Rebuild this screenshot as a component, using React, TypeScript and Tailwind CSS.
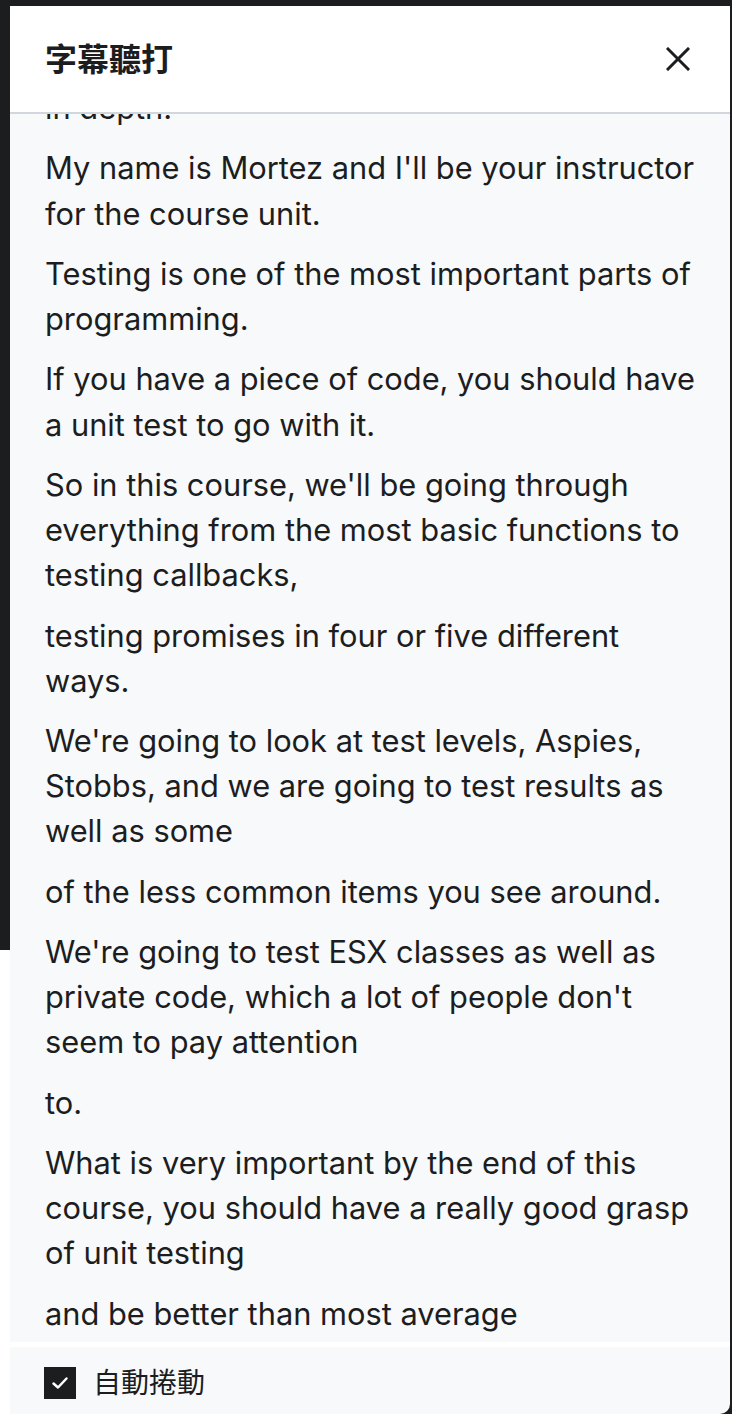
const cues: string[][] = [
  ["in depth."],
  ["My name is Mortez and I'll be your instructor", "for the course unit."],
  ["Testing is one of the most important parts of", "programming."],
  ["If you have a piece of code, you should have", "a unit test to go with it."],
  [
    "So in this course, we'll be going through",
    "everything from the most basic functions to",
    "testing callbacks,",
  ],
  ["testing promises in four or five different", "ways."],
  [
    "We're going to look at test levels, Aspies,",
    "Stobbs, and we are going to test results as",
    "well as some",
  ],
  ["of the less common items you see around."],
  [
    "We're going to test ESX classes as well as",
    "private code, which a lot of people don't",
    "seem to pay attention",
  ],
  ["to."],
  [
    "What is very important by the end of this",
    "course, you should have a really good grasp",
    "of unit testing",
  ],
  ["and be better than most average"],
];

export default function App() {
  return (
    <div
      className="flex h-[1414px] w-[732px] overflow-hidden bg-[#1c1d1f] text-[#1c1d1f]"
      style={{ fontFamily: "Inter, 'Noto Sans CJK TC', sans-serif" }}
    >
      <div className="flex w-[10px] flex-col">
        <div className="h-[950px] bg-[#1c1d1f]" />
        <div className="flex-1 bg-white" />
      </div>
      <div className="mt-[6px] flex w-[720px] flex-col overflow-hidden rounded-br-[10px]">
        <div className="flex h-[108px] shrink-0 items-center justify-between border-b-2 border-[#d1d7dc] bg-white pl-[35px] pr-[40px]">
          <h2 className="pt-[2px] text-[32px] font-bold leading-none">字幕聽打</h2>
          <button aria-label="關閉" className="flex h-[24px] w-[24px] items-center justify-center">
            <svg width="24" height="24" viewBox="0 0 24 24" fill="none" stroke="#1c1d1f" strokeWidth="3" strokeLinecap="square">
              <path d="M2 2L22 22M22 2L2 22" />
            </svg>
          </button>
        </div>
        <div className="flex-1 overflow-hidden bg-[#f7f9fa] px-[35px]">
          <div className="-mt-[29px] flex flex-col gap-[15.2px] text-[30.8px] leading-[45.15px]">
            {cues.map((lines, i) => (
              <p key={i}>
                {lines.map((l, j) => (
                  <span key={j} className="block whitespace-nowrap">
                    {l}
                  </span>
                ))}
              </p>
            ))}
          </div>
        </div>
        <div className="flex h-[72px] shrink-0 items-center gap-[17px] border-t-[5px] border-white bg-[#f7f9fa] pl-[34px] pt-[5px]">
          <span className="flex h-[32px] w-[32px] items-center justify-center bg-[#1c1d1f]">
            <svg width="18" height="18" viewBox="0 0 18 18" fill="none" stroke="white" strokeWidth="2.5" strokeLinecap="round" strokeLinejoin="round">
              <path d="M2.5 9.5L7 13.5L15.5 4.5" />
            </svg>
          </span>
          <span className="text-[28px] leading-none">自動捲動</span>
        </div>
      </div>
      <div className="w-[2px]" />
    </div>
  );
}
